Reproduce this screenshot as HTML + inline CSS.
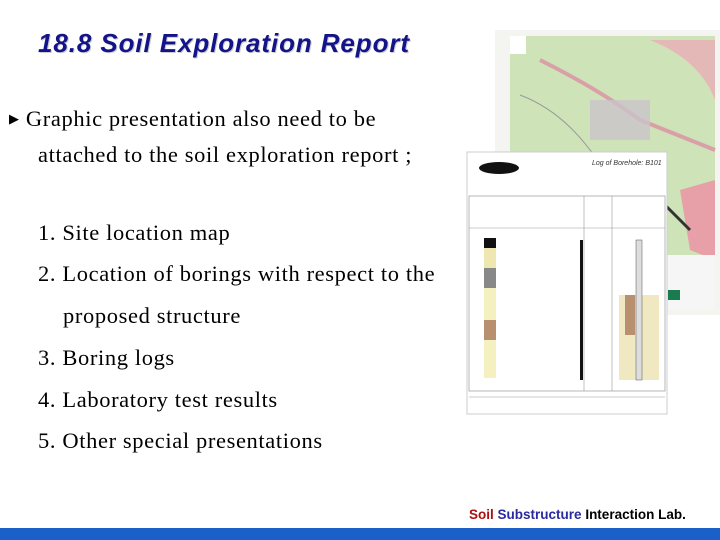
<!DOCTYPE html>
<html><head><meta charset="utf-8"><style>
body{margin:0;width:720px;height:540px;background:#fff;position:relative;overflow:hidden;font-family:"Liberation Serif",serif}
.t{position:absolute;white-space:nowrap}
.s{font-size:22.5px;letter-spacing:0.62px;color:#000}
</style></head><body>
<div class="t" style="left:38px;top:28px;font:italic bold 26px 'Liberation Sans',sans-serif;letter-spacing:0.9px;color:#14148a;text-shadow:1px 1px 0 #ccc">18.8 Soil Exploration Report</div>
<div class="t s" style="left:9px;top:106px"><span style="font-size:13px;position:relative;top:-3px">&#9654;</span> Graphic presentation also need to be</div>
<div class="t s" style="left:38px;top:142px">attached to the soil exploration report ;</div>
<div class="t s" style="left:38px;top:220px">1. Site location map</div>
<div class="t s" style="left:38px;top:261px">2. Location of borings with respect to the</div>
<div class="t s" style="left:63px;top:303px">proposed structure</div>
<div class="t s" style="left:38px;top:345px">3. Boring logs</div>
<div class="t s" style="left:38px;top:387px">4. Laboratory test results</div>
<div class="t s" style="left:38px;top:428px">5. Other special presentations</div>

<svg style="position:absolute;left:0;top:0" width="720" height="540">
<rect x="495" y="30" width="225" height="285" fill="#f4f4f0"/>
<rect x="510" y="36" width="205" height="270" fill="#cfe3b8"/>
<path d="M540 60 Q600 90 640 120 L715 150" stroke="#d9a0a8" stroke-width="4" fill="none"/>
<path d="M520 95 Q560 110 590 150 Q610 170 640 180" stroke="#999" stroke-width="1" fill="none"/>
<rect x="590" y="100" width="60" height="40" fill="#c9c3c9" opacity=".8"/>
<path d="M650 40 Q700 60 715 100 L715 40Z" fill="#e5b8b8"/>
<path d="M680 190 L715 180 L715 260 L690 250Z" fill="#e8a0a8"/>
<path d="M650 190 L690 230" stroke="#333" stroke-width="3"/>
<rect x="510" y="36" width="16" height="18" fill="#fff"/>
<rect x="660" y="255" width="55" height="55" fill="#f6f6f6"/>
<rect x="668" y="290" width="12" height="10" fill="#1a7a50"/>
<rect x="467" y="152" width="200" height="262" fill="#fff" stroke="#ccc"/>
<ellipse cx="499" cy="168" rx="20" ry="6" fill="#111"/>
<text x="592" y="165" font-family="Liberation Sans" font-style="italic" font-size="7" fill="#333">Log of Borehole: B101</text>
<rect x="469" y="196" width="196" height="195" fill="none" stroke="#999" stroke-width=".7"/>
<line x1="469" y1="228" x2="665" y2="228" stroke="#999" stroke-width=".6"/>
<rect x="484" y="238" width="12" height="10" fill="#111"/>
<rect x="484" y="248" width="12" height="20" fill="#eee8b0"/>
<rect x="484" y="268" width="12" height="20" fill="#888"/>
<rect x="484" y="288" width="12" height="44" fill="#f5f0c0"/>
<rect x="484" y="320" width="12" height="20" fill="#b89070"/>
<rect x="484" y="340" width="12" height="38" fill="#f5f0c0"/>
<line x1="584" y1="196" x2="584" y2="391" stroke="#999" stroke-width=".6"/>
<line x1="612" y1="196" x2="612" y2="391" stroke="#999" stroke-width=".6"/>
<rect x="580" y="240" width="3" height="140" fill="#111"/>
<rect x="619" y="295" width="40" height="85" fill="#f0e8c0"/>
<rect x="625" y="295" width="10" height="40" fill="#b89070"/>
<rect x="636" y="240" width="6" height="140" fill="#ddd" stroke="#555" stroke-width=".5"/>
<line x1="469" y1="397" x2="665" y2="397" stroke="#999" stroke-width=".5"/>
<rect x="0" y="528" width="720" height="12" fill="#1b5fc8"/>
</svg>
<div class="t" style="left:469px;top:507px;font:bold 13.5px 'Liberation Sans',sans-serif"><span style="color:#a11">Soil</span> <span style="color:#2a2aa0">Substructure</span> <span style="color:#000">Interaction Lab.</span></div>
</body></html>
